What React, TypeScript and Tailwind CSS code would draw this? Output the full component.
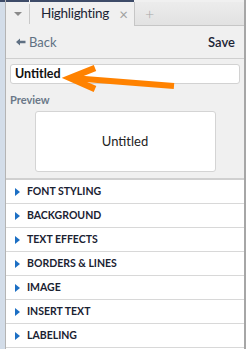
import React from 'react';

const sections = [
  'FONT STYLING',
  'BACKGROUND',
  'TEXT EFFECTS',
  'BORDERS & LINES',
  'IMAGE',
  'INSERT TEXT',
  'LABELING',
];

const App = () => {
  return (
    <div className="w-[247px] h-[349px] flex bg-white overflow-hidden font-['Lato','Noto_Sans',sans-serif]">
      {/* left edge strip */}
      <div className="w-[5px] bg-[#d3dde9] border-t-2 border-[#3d4b68]"></div>

      <div className="w-[241px] flex flex-col bg-[#f0f0f0] border-l border-r-2 border-l-[#b4b4b4] border-r-[#a6a6a6]">
        {/* tab bar */}
        <div className="h-[26px] flex shrink-0">
          <div className="w-[23px] flex items-center justify-center border-t-2 border-[#3d4b68]">
            <div className="w-0 h-0 border-l-[4px] border-r-[4px] border-t-[4px] border-l-transparent border-r-transparent border-t-[#8a8a8a]"></div>
          </div>
          <div className="w-[1px] bg-[#c8c8c8] mt-[4px] mb-[2px]"></div>
          <div className="w-[104px] flex items-center border-t-2 border-[#3d4b68] pl-[11px] pr-[5px]">
            <span className="text-[13.5px] tracking-[-0.3px] text-[#1c2535] leading-none flex-1">Highlighting</span>
            <span className="text-[15px] text-[#a0a0a0] leading-none mr-[1px]">×</span>
          </div>
          <div className="flex-1 mt-[2px] flex items-center pl-[10px] bg-gradient-to-b from-[#ececec] to-[#e2e2e2] border-l border-b border-[#c6c6c6]">
            <span className="text-[16px] text-[#a8a8a8] leading-none font-light">+</span>
          </div>
        </div>

        {/* back / save */}
        <div className="h-[33px] flex items-center justify-between pl-[10px] pr-[9px] border-b border-[#cfcfcf] shrink-0">
          <div className="flex items-center gap-[3px] text-[#5f7083]">
            <svg width="10" height="8" viewBox="0 0 10 8">
              <path d="M0 4 L4 0.5 L4 2.8 L9.5 2.8 L9.5 5.2 L4 5.2 L4 7.5 Z" fill="#5f7083" />
            </svg>
            <span className="text-[13px] leading-none">Back</span>
          </div>
          <span className="text-[13px] font-semibold text-[#1c2535] leading-none">Save</span>
        </div>

        {/* name input */}
        <div className="px-[4px] pt-[5px] relative">
          <div className="h-[20px] bg-white border border-[#d2d2d2] rounded-[3px] flex items-center px-[4px]">
            <span className="text-[12.5px] font-bold text-[#111] leading-none">Untitled</span>
          </div>
          <svg className="absolute left-[56px] top-[4px]" width="120" height="30" viewBox="0 0 120 30">
            <path d="M10 15 L112 23" stroke="#ff8200" strokeWidth="6" fill="none" />
            <path d="M33 5 L8 15 L33 26" stroke="#ff8200" strokeWidth="6.5" fill="none" strokeLinejoin="miter" />
          </svg>
        </div>

        {/* preview */}
        <div className="px-[4px] pt-[10px] pb-[6px] border-b-2 border-[#d0d0d0]">
          <div className="text-[11px] font-bold text-[#6a7888] leading-none mb-[6px]">Preview</div>
          <div className="mx-auto w-[181px] h-[61px] bg-white border border-[#d4d4d4] rounded-[3px] flex items-center justify-center">
            <span className="text-[13px] text-[#222]">Untitled</span>
          </div>
        </div>

        {/* sections */}
        <div className="flex-1 bg-white">
          {sections.map((s) => (
            <div key={s} className="h-[24px] flex items-center pl-[9px] border-b border-[#d8d8d8]">
              <div className="w-0 h-0 border-t-[4px] border-b-[4px] border-l-[5px] border-t-transparent border-b-transparent border-l-[#1c6fc4] mr-[7px]"></div>
              <span className="text-[10.5px] font-bold text-[#1a2232] leading-none">{s}</span>
            </div>
          ))}
        </div>
      </div>
      <div className="w-[1px] bg-white"></div>
    </div>
  );
};

export default App;
